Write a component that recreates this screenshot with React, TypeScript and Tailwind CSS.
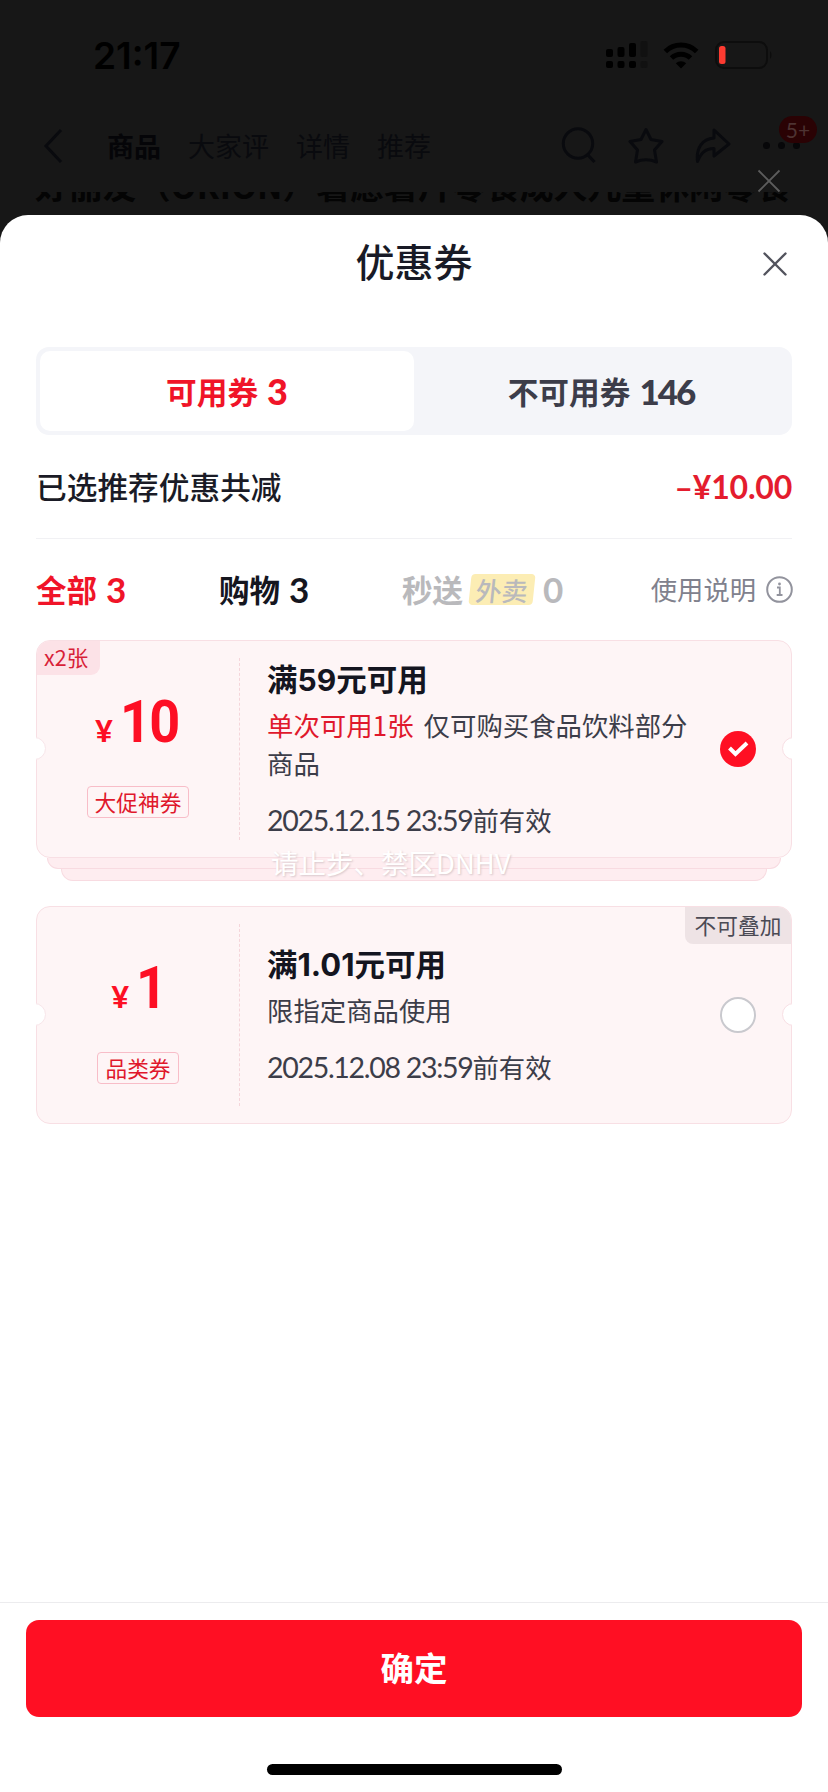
import type { ReactNode } from 'react';

interface CouponProps {
  amount: string;
  tag: string;
  title: ReactNode;
  children: ReactNode;
  date: string;
  selected?: boolean;
  corner?: ReactNode;
}

function StatusBar() {
  return (
    <div className="flex h-[110px] items-center justify-between pl-[93px] pr-[55px] text-black">
      <span className="font-['Inter'] text-[37px] font-semibold leading-none">21:17</span>
      <div className="flex items-center">
        <svg width="42" height="28" viewBox="0 0 42 28" fill="currentColor">
          <rect x="0" y="8" width="7" height="8" rx="2" />
          <rect x="11.5" y="6" width="7" height="10" rx="2" />
          <rect x="23" y="2" width="7" height="14" rx="2" />
          <rect x="34.500" y="0" width="7" height="16" rx="2" fill="#111111" />
          <rect x="0" y="20" width="7" height="7" rx="2" />
          <rect x="11.5" y="20" width="7" height="7" rx="2" />
          <rect x="23" y="20" width="7" height="7" rx="2" />
          <rect x="34.500" y="20" width="7" height="7" rx="2" fill="#111111" />
        </svg>
        <svg className="ml-[15px]" width="36" height="27" viewBox="0 0 36 27" fill="none" stroke="currentColor" strokeWidth="5">
          <path d="M2.300 9.500 A22.500 22.500 0 0 1 33.700 9.500" />
          <path d="M8.500 16 A13.700 13.700 0 0 1 27.500 16" />
          <path d="M18 26.500 L12.800 21.300 A7.400 7.400 0 0 1 23.200 21.300 Z" fill="currentColor" stroke="none" />
        </svg>
        <svg className="ml-[16px]" width="58" height="28" viewBox="0 0 58 28" fill="none">
          <rect x="1" y="1" width="51" height="26" rx="8" stroke="#0d0d0d" strokeWidth="2" />
          <path d="M55 10 Q58 14 55 18 Z" fill="#0d0d0d" />
          <rect x="4" y="5" width="6.500" height="18" rx="2.500" fill="#fd3b31" />
        </svg>
      </div>
    </div>
  );
}

function NavBar() {
  return (
    <div className="flex h-[82px] items-center pl-[43px] pb-[11px] text-[27px] leading-none text-[#090a0e]">
      <svg width="20" height="38" viewBox="0 0 20 38" fill="none" stroke="currentColor" strokeWidth="3">
        <path d="M18 3 L3 19 L18 35" />
      </svg>
      <span className="ml-[44px] font-bold text-[#050508]">商品</span>
      <span className="ml-[27px]">大家评</span>
      <span className="ml-[27px]">详情</span>
      <span className="ml-[27px]">推荐</span>
      <svg className="ml-[130px]" width="36" height="38" viewBox="0 0 36 38" fill="none" stroke="currentColor" strokeWidth="3">
        <circle cx="17" cy="16.500" r="14.700" />
        <path d="M26 27 L33.500 35" />
      </svg>
      <svg className="ml-[31px]" width="36" height="38" viewBox="0 0 36 38" fill="none" stroke="currentColor" strokeWidth="3" strokeLinejoin="round">
        <path d="M18 2.500 L23 12.500 L34 14.500 L26.500 23 L28.500 35 Q18 30.500 7.500 35 L9.500 23 L2 14.500 L13 12.500 Z" />
      </svg>
      <svg className="ml-[31px]" width="36" height="38" viewBox="0 0 36 38" fill="none" stroke="currentColor" strokeWidth="3" strokeLinejoin="round">
        <path d="M19 3 L34 17 L19 29 V21.500 C10 21.500 6 26 2.500 34.500 C1 21 7 12 19 11 Z" />
      </svg>
      <div className="relative ml-[32px] flex gap-2">
        <i className="size-[7px] rounded-full bg-[#070709]" />
        <i className="size-[7px] rounded-full bg-[#070709]" />
        <i className="size-[7px] rounded-full bg-[#070709]" />
        <span className="absolute -top-[26px] left-[16px] flex h-[27px] w-[38px] items-center justify-center rounded-full bg-[#2a0204] font-['Lato'] text-[21px] text-[#4d3332]">
          5+
        </span>
      </div>
    </div>
  );
}

function Coupon({ amount, tag, title, children, date, selected, corner }: CouponProps) {
  return (
    <div className="relative overflow-hidden">
      <div className="relative flex h-[218px] overflow-hidden rounded-[14px] border border-[#f8dfe4] bg-[#fef5f6]">
        {corner}
        <div className="flex w-[202px] flex-col items-center pt-[58px]">
          <div className="flex h-[45px] items-end gap-[7px] font-bold text-[#fd0f24]">
            <span className="font-['Lato'] text-[30px] font-black leading-[27px]">¥</span>
            <span className="-mr-[4px] origin-left scale-x-90 font-['Roboto'] text-[60px] leading-[45px] tracking-[-2px]">{amount}</span>
          </div>
          <span className="mt-[42px] rounded-[4px] border border-[#f8bdc8] px-[7px] text-[21.700px] leading-[30px] text-[#e0182c]">{tag}</span>
        </div>
        <div className="my-[17px] border-l border-dashed border-[#f5d5da]" />
        <div className="flex w-[467px] flex-col justify-center pl-[27px] text-[26.400px] leading-[38px] text-[#3c3d49]">
          <div className="mb-[7px] text-[30.500px] font-bold leading-[38px] text-[#14151f]">{title}</div>
          <div>{children}</div>
          <div className="mt-[19px] whitespace-nowrap">
            <span className="font-['Lato'] text-[28.500px] leading-none tracking-[-1.300px]">{date}</span>
            前有效
          </div>
        </div>
        <div className="flex flex-1 items-center pl-[13px]">
          {selected ? (
            <svg width="36" height="36" viewBox="0 0 36 36" fill="none">
              <circle cx="18" cy="18" r="18" fill="#ff0f23" />
              <path d="M9.500 17 L15.500 23 L27 12" stroke="white" strokeWidth="4" />
            </svg>
          ) : (
            <span className="size-9 rounded-full border-2 border-[#c9c9ce] bg-white" />
          )}
        </div>
      </div>
      {/* ticket notches */}
      <span className="absolute -left-[13px] top-[97px] size-[23px] rounded-full border border-[#f8e6ea] bg-white" />
      <span className="absolute -right-[13px] top-[97px] size-[23px] rounded-full border border-[#f8dfe4] bg-white" />
    </div>
  );
}

export default function App() {
  return (
    <div className="h-[1792px] w-[828px] overflow-hidden bg-[#171717] font-['Noto_Sans_CJK_SC',sans-serif]">
      <div className="relative h-[215px]">
        <StatusBar />
        <NavBar />
        <div className="flex h-[23px] items-end overflow-hidden pl-[35px]">
          <span className="mb-[12px] whitespace-nowrap text-[33.900px] font-bold leading-[36px] text-[#040404]">
            好丽友（ORION）薯愿薯片零食成人儿童休闲零食
          </span>
        </div>
        <svg className="absolute left-[757px] top-[169px]" width="24" height="24" viewBox="0 0 24 24" stroke="#5c5c5c" strokeWidth="1.800">
          <path d="M1.500 1.500 L22.500 22.500 M22.500 1.500 L1.500 22.500" />
        </svg>
      </div>

      <div className="flex h-[1577px] flex-col rounded-t-[28px] bg-white">
        <div className="relative flex h-[96px] items-center justify-center pb-[5px]">
          <h1 className="text-[39px] font-medium leading-none text-[#181a26]">优惠券</h1>
          <svg className="absolute right-[41px] top-[37px]" width="24" height="24" viewBox="0 0 24 24" stroke="#52535d" strokeWidth="2.400" strokeLinecap="round">
            <path d="M1.500 1.500 L22.500 22.500 M22.500 1.500 L1.500 22.500" />
          </svg>
        </div>

        <div className="mx-9 mt-[36px] flex h-[88px] rounded-[13px] bg-[#f4f5f9] p-1 text-[30.700px] font-bold leading-none">
          <div className="flex w-[374px] items-center justify-center gap-[9px] rounded-[10px] bg-white text-[#f01428]">
            可用券
            <span className="font-['Lato'] text-[36px] font-black leading-none">3</span>
          </div>
          <div className="flex flex-1 items-center justify-center gap-[9px] text-[#3c3d4a]">
            不可用券
            <span className="font-['Lato'] text-[35px] font-black leading-none tracking-[-2px]">146</span>
          </div>
        </div>

        <div className="mx-9 flex h-[104px] items-center justify-between border-b border-[#f1f1f4] text-[30.700px] font-medium text-[#1a1b26]">
          <span>已选推荐优惠共减</span>
          <span className="font-['Lato'] text-[32px] font-bold tracking-[-0.200px] text-[#e41c2e]">–¥10.00</span>
        </div>

        <div className="mx-9 flex h-[101px] items-center text-[30.500px] font-bold leading-none">
          <div className="flex w-[183px] items-center gap-[9px] text-[#f01428]">
            全部
            <span className="font-['Lato'] text-[35px]">3</span>
          </div>
          <div className="flex w-[183px] items-center gap-[9px] text-[#15161f]">
            购物
            <span className="font-['Lato'] text-[35px]">3</span>
          </div>
          <div className="flex items-center text-[#b9b9bc]">
            秒送
            <span className="ml-[7px] flex h-[31px] w-[64px] -skew-x-6 items-center justify-center rounded-[4px] bg-[#fcedb4] text-[26px] font-medium">
              外卖
            </span>
            <span className="ml-[9px] font-['Lato'] text-[35px]">0</span>
          </div>
          <div className="-mr-px ml-auto flex items-center gap-[10px] text-[26.300px] font-normal text-[#80818d]">
            使用说明
            <svg width="27" height="27" viewBox="0 0 27 27" fill="none" stroke="#92939d" strokeWidth="2">
              <circle cx="13.500" cy="13.500" r="12.300" />
              <path d="M11 11.500 H13.800 V19 M10.700 19 H16.500" strokeWidth="1.800" />
              <circle cx="13.500" cy="8" r="1.400" fill="#92939d" stroke="none" />
            </svg>
          </div>
        </div>

        <div className="relative mx-9">
          <Coupon
            amount="10"
            tag="大促神券"
            title={<>满<span className="font-['Inter'] text-[30px]">59</span>元可用</>}
            date="2025.12.15 23:59"
            selected
            corner={
              <span className="absolute left-0 top-0 h-[34px] w-[63px] rounded-br-[9px] bg-[#fce2e7] pl-[7px] text-[21.500px] leading-[32px] text-[#d81f38]">
                x2张
              </span>
            }
          >
            <span className="mr-[10px] text-[#e0182c]">单次可用1张</span>
            仅可购买食品饮料部分商品
          </Coupon>
          {/* stacked edges under the first coupon */}
          <div className="mx-[11px] h-[11px] rounded-b-[14px] border border-t-0 border-[#f8dbe1] bg-[#feedf0]" />
          <div className="mx-[25px] h-[12px] rounded-b-[14px] border border-t-0 border-[#f8dbe1] bg-[#feedf0]" />
          <span className="absolute left-[235px] top-[207px] whitespace-nowrap text-[27.500px] leading-[30px] text-white [text-shadow:1px_1px_2px_#d8c8cc]">
            请止步、禁区DNHV
          </span>
        </div>

        <div className="mx-9 mt-[25px]">
          <Coupon
            amount="1"
            tag="品类券"
            title={<>满<span className="font-['Inter'] text-[31px]">1.01</span>元可用</>}
            date="2025.12.08 23:59"
            corner={
              <span className="absolute right-0 top-0 h-[37px] w-[106px] rounded-bl-[8px] bg-[#eee3e5] text-center text-[21.700px] leading-[36px] text-[#4b4a54]">
                不可叠加
              </span>
            }
          >
            限指定商品使用
          </Coupon>
        </div>

        <div className="mt-auto flex h-[190px] flex-col items-center border-t border-[#ececee] px-[26px] pt-[17px]">
          <button className="h-[97px] w-full rounded-[13px] bg-[#ff0f23] pb-[2px] text-[33.500px] font-bold text-white">确定</button>
          <div className="mt-[47px] h-[11px] w-[295px] rounded-full bg-black" />
        </div>
      </div>
    </div>
  );
}
